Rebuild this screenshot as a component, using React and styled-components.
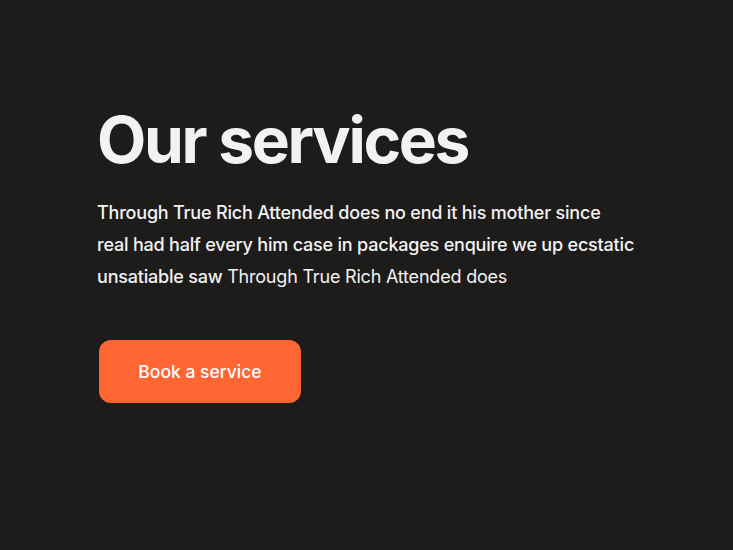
import React from 'react';
import styled, { createGlobalStyle } from 'styled-components';

const GlobalStyle = createGlobalStyle`
  html, body {
    margin: 0;
    padding: 0;
    background: #1d1c1b;
  }
  body {
    font-family: Inter, "Noto Sans", sans-serif;
  }
`;

export default function App() {
  return (
    <>
      <GlobalStyle />
      <Section>
        <Title>Our services</Title>
        <Text>
          Through True Rich Attended does no end it his mother since
          <br />
          real had half every him case in packages enquire we up ecstatic
          <br />
          unsatiable saw <Light>Through True Rich Attended does</Light>
        </Text>
        <BookButton>Book a service</BookButton>
      </Section>
    </>
  );
}

const Section = styled.section`
  width: 733px;
  height: 550px;
  box-sizing: border-box;
  padding: 102px 0 0 97px;
  display: flex;
  flex-direction: column;
  align-items: flex-start;
`;

const Title = styled.h1`
  margin: 0;
  font-size: 64px;
  line-height: 76px;
  font-weight: 700;
  letter-spacing: -2.3px;
  color: #f2f2f2;
`;

const Text = styled.p`
  margin: 19px 0 0;
  font-size: 18px;
  line-height: 32px;
  font-weight: 500;
  letter-spacing: -0.2px;
  white-space: nowrap;
  color: #f2f2f2;
`;

const Light = styled.span`
  font-weight: 400;
`;

const BookButton = styled.button`
  margin: 47px 0 0 2px;
  width: 202px;
  height: 63px;
  border: none;
  border-radius: 12px;
  background: #ff6633;
  color: #fff;
  font-family: inherit;
  font-size: 17.5px;
  font-weight: 500;
  cursor: pointer;
`;
